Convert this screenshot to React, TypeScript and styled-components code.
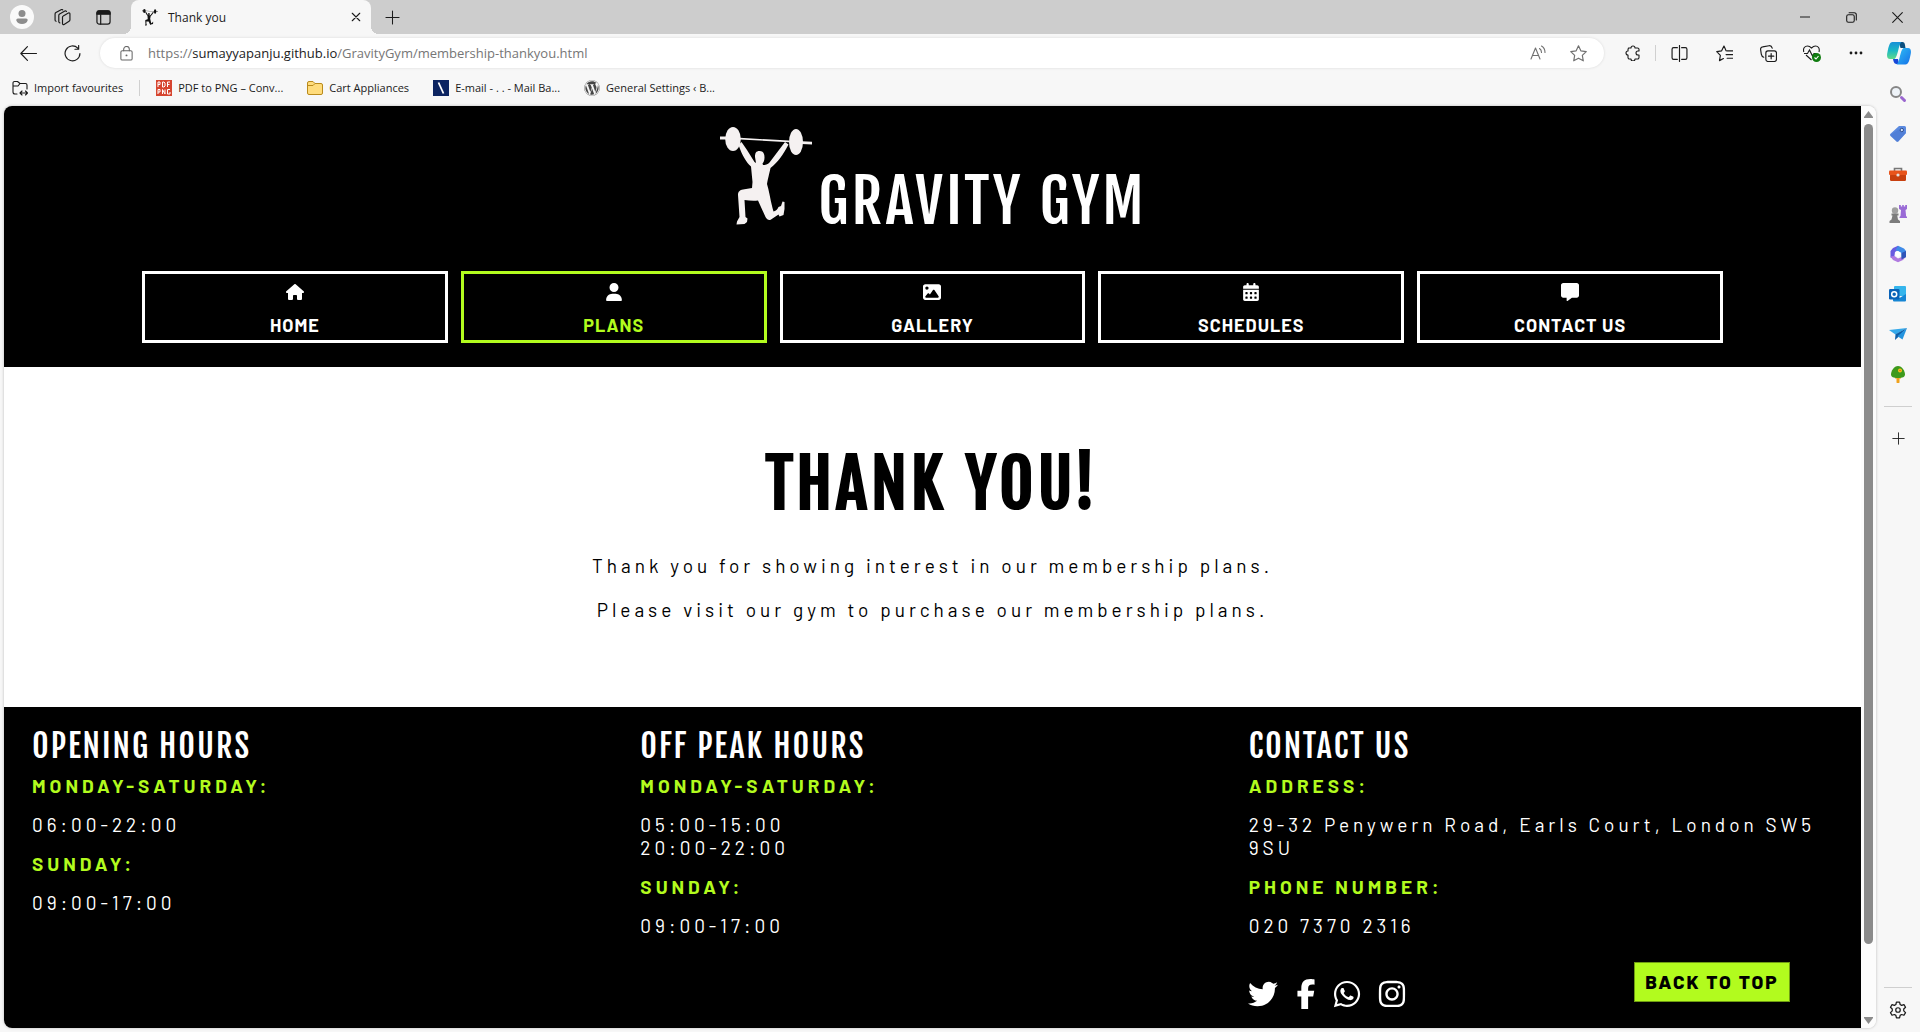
import React from "react";
import styled, { createGlobalStyle, css } from "styled-components";
import {
  FaHouse,
  FaUser,
  FaImage,
  FaCalendarDays,
  FaMessage,
  FaTwitter,
  FaFacebookF,
  FaWhatsapp,
  FaInstagram,
  FaWordpress,
} from "react-icons/fa6";

const LIME = "#b2fb1e";
const UI_FONT = `"Segoe UI", "Open Sans", "Noto Sans", sans-serif`;
const BODY_FONT = `Barlow, Roboto, "Liberation Sans", sans-serif`;
const DISPLAY_FONT = `"Fjalla One", "Roboto Condensed", "Liberation Sans Narrow", "Liberation Sans", sans-serif`;

const GlobalStyle = createGlobalStyle`
  *, *::before, *::after { box-sizing: border-box; }
  body { margin: 0; font-family: ${UI_FONT}; color: #1b1b1b; background: #f7f7f7; }
  h1, h2, h3, p, dl, dt, dd, ul { margin: 0; padding: 0; }
  button { font: inherit; color: inherit; border: 0; background: none; padding: 0; cursor: pointer; }
  a { color: inherit; text-decoration: none; }
  svg { display: block; flex: none; }
`;

/* ---------- browser window ---------- */

const Window = styled.div`
  display: flex;
  flex-direction: column;
  min-height: 100vh;
  background: #f7f7f7;
`;

const TitleBar = styled.div`
  display: flex;
  height: 34px;
  background: #cdcdcd;
`;

const TitleTools = styled.div`
  display: flex;
  align-items: center;
  gap: 15px;
  width: 131px;
  padding-left: 10px;
`;

const Avatar = styled.button`
  width: 24px;
  height: 24px;
  border-radius: 50%;
  background: #fafafa;
`;

const Tab = styled.div`
  position: relative;
  display: flex;
  align-items: center;
  gap: 10px;
  width: 240px;
  padding: 0 10px 0 11px;
  font-size: 12px;
  background: #f7f7f7;
  border-radius: 8px 8px 0 0;

  &::before,
  &::after {
    content: "";
    position: absolute;
    bottom: 0;
    width: 8px;
    height: 8px;
  }
  &::before {
    right: 100%;
    background: radial-gradient(circle at 0 0, transparent 8px, #f7f7f7 8px);
  }
  &::after {
    left: 100%;
    background: radial-gradient(circle at 100% 0, transparent 8px, #f7f7f7 8px);
  }
`;

const TabTitle = styled.span`
  flex: 1;
`;

const NewTab = styled.button`
  width: 42px;
  display: grid;
  place-items: center;
`;

const WindowControls = styled.div`
  display: flex;
  margin-left: auto;
`;

const WindowButton = styled.button`
  width: 46px;
  display: grid;
  place-items: center;
`;

const Toolbar = styled.div`
  display: flex;
  align-items: center;
  height: 38px;
`;

const ToolButton = styled.button<{ $w?: number }>`
  width: ${(p) => p.$w ?? 44}px;
  height: 30px;
  display: grid;
  place-items: center;
`;

const NavButtons = styled.div`
  display: flex;
  padding-right: 12px;
`;

const AddressBar = styled.div`
  flex: 1;
  display: flex;
  align-items: center;
  height: 30px;
  padding: 0 6px 0 4px;
  border-radius: 15px;
  background: #fff;
  box-shadow: 0 0 3px rgba(0, 0, 0, 0.12);
`;

const Url = styled.div`
  flex: 1;
  font-size: 13px;
  line-height: 20px;
  color: #767676;
  outline: none;
  white-space: nowrap;

  b {
    font-weight: 400;
    color: #1b1b1b;
  }
`;

const Divider = styled.span`
  width: 1px;
  height: 16px;
  background: #d0d0d0;
`;

const ToolbarIcons = styled.div`
  display: flex;
  align-items: center;
  padding-left: 7px;
`;

const Body = styled.div`
  flex: 1;
  display: flex;
`;

const Main = styled.div`
  flex: 1;
  min-width: 0;
  display: flex;
  flex-direction: column;
  padding: 0 0 4px 4px;
`;

const Bookmarks = styled.nav`
  display: flex;
  align-items: center;
  gap: 24px;
  height: 34px;
  padding: 0 0 3px 8px;

  ${Divider} {
    margin: 0 -8px;
  }
`;

const Bookmark = styled.a`
  display: flex;
  align-items: center;
  gap: 6px;
  font-size: 11px;
  white-space: nowrap;
`;

const Viewport = styled.div`
  position: relative;
  flex: 1;
  display: flex;
  border-radius: 8px;
  overflow: hidden;
  background: #fff;
  box-shadow: 0 0 3px rgba(0, 0, 0, 0.25);
`;

const Scrollbar = styled.div`
  display: flex;
  flex-direction: column;
  align-items: center;
  gap: 6px;
  width: 15px;
  padding: 5px 0 4px;
  background: #fcfcfc;
`;

const Thumb = styled.div`
  flex: 826;
  width: 9px;
  border-radius: 5px;
  background: #8b8b8b;
`;

const TrackRest = styled.div`
  flex: 61;
`;

const Sidebar = styled.aside`
  display: flex;
  flex-direction: column;
  align-items: center;
  width: 44px;
  padding: 2px 0 2px;
`;

const SideButton = styled.button`
  width: 40px;
  height: 40px;
  display: grid;
  place-items: center;
`;

const SideRule = styled.span<{ $bottom?: boolean }>`
  width: 28px;
  height: 1px;
  background: #cfcfcf;
  ${(p) => (p.$bottom ? css`margin: auto 0 2px;` : css`margin: 12px 0 11px;`)}
`;

/* ---------- gym site ---------- */

const Site = styled.div`
  flex: 1;
  min-width: 0;
  display: flex;
  flex-direction: column;
  font-family: ${BODY_FONT};
`;

const SiteHeader = styled.header`
  padding: 21px 0 24px;
  background: #000;
  color: #fff;
`;

const Brand = styled.a`
  display: flex;
  justify-content: center;
  gap: 6px;
  height: 144px;
  padding-left: 2px;
`;

const BrandName = styled.h1`
  font: 400 60px/84px ${DISPLAY_FONT};
  letter-spacing: 3px;
  padding-top: 32px;
`;

const SiteNav = styled.nav`
  display: grid;
  grid-template-columns: repeat(5, 1fr);
  gap: 13px;
  margin: 0 138px;
`;

const NavLink = styled.a<{ $active?: boolean }>`
  display: flex;
  flex-direction: column;
  align-items: center;
  gap: 11px;
  height: 72px;
  padding-top: 9px;
  border: 3px solid ${(p) => (p.$active ? LIME : "#fff")};
  font-size: 18px;
  line-height: 26px;
  font-weight: 700;
  letter-spacing: 1px;

  svg {
    width: auto;
    height: 18px;
  }

  span {
    color: ${(p) => (p.$active ? LIME : "#fff")};
  }
`;

const Message = styled.main`
  padding: 74px 0 85px;
  text-align: center;
  color: #000;
`;

const MessageTitle = styled.h2`
  font: 700 66px/86px ${DISPLAY_FONT};
  letter-spacing: 4px;
  margin-bottom: 27px;
`;

const MessageText = styled.p`
  font-size: 19px;
  line-height: 24px;
  letter-spacing: 4px;

  & + & {
    margin-top: 20px;
  }
`;

const SiteFooter = styled.footer`
  flex: 1;
  display: grid;
  grid-template-columns: repeat(3, 1fr);
  padding: 17px 4px 0 28px;
  background: #000;
  color: #fff;
`;

const FooterColumn = styled.section`
  padding-right: 28px;
`;

const FooterTitle = styled.h3`
  font: 400 32px/44px ${DISPLAY_FONT};
  letter-spacing: 2px;
  margin-bottom: 6px;
`;

const Facts = styled.dl`
  font-size: 19px;
  line-height: 23px;
  letter-spacing: 4px;

  dt {
    font-weight: 700;
    color: ${LIME};
  }
  dd {
    margin: 16px 0;
  }
`;

const Social = styled.div`
  display: flex;
  align-items: center;
  gap: 19px;
  margin-top: 42px;
`;

const SocialLink = styled.a<{ $w: number }>`
  display: flex;
  justify-content: center;
  width: ${(p) => p.$w}px;
`;

const BackToTop = styled.a`
  position: absolute;
  right: 86px;
  bottom: 26px;
  width: 156px;
  height: 40px;
  border: 1px solid #6f9c12;
  background: ${LIME};
  color: #000;
  font: 800 19px/38px ${BODY_FONT};
  letter-spacing: 2px;
  text-align: center;
  white-space: nowrap;
`;

/* ---------- drawings ---------- */

const Lifter = ({ width, height, color }: { width: number; height: number; color: string }) => (
  <svg width={width} height={height} viewBox="0 0 92 100" fill={color} aria-hidden="true">
    <ellipse cx="13" cy="12" rx="7.8" ry="12" />
    <ellipse cx="76" cy="15" rx="7" ry="13" />
    <path d="M0 9.5h7v3H0z M20 10.800l49 2.800v1.600L20 12.400z M82 14.200l10 .6v2.800L82 17z" />
    <path d="M39.500 24c4 0 5 3 5 6.500 0 3-1 5-2 6l.5 1.500c2 0 5-.5 6.500-2.500L65 15l3.500 2.500C63 28 58 35 50.500 41c-1.500 7-2.500 10-3.500 16 2 6 3 14 5.500 24l1 3.500c3-1 4-2 5-4.500l2.500-1 1.500-4.500 2 .5v7l-1 6-4 1.500-1-2-7.500 5c-2 1.500-4 0-5.500-2.500L38 73.500c-5 .8-9 0-13.500-.5l1 17 2 1.500-.5 3.500-2.500 2-8 .5.500-3 2.500-4.500L18 68c0-3.500 2-5 5-5.500l9-1.500.5-6L31 39.500C26 35 22 28 18.500 18l3-3L27 23l7.500 12 1.500 1-1-6c0-4 1-6 4.500-6z" />
  </svg>
);

type IconProps = { size?: number; children: React.ReactNode; color?: string; sw?: number };
const Line = ({ size = 16, children, color = "#1b1b1b", sw = 1.1 }: IconProps) => (
  <svg width={size} height={size} viewBox="0 0 16 16" fill="none" stroke={color} strokeWidth={sw} strokeLinecap="round" strokeLinejoin="round" aria-hidden="true">
    {children}
  </svg>
);

const STAR = "M8 .8l2.200 4.700 5.100.7-3.700 3.600.9 5.100L8 12.400l-4.500 2.500.9-5.100L.7 6.200l5.100-.7z";

const sideIcons: { label: string; art: React.ReactNode }[] = [
  {
    label: "Search",
    art: (
      <svg width="18" height="18" viewBox="0 0 18 18" fill="none">
        <circle cx="7" cy="7" r="5" stroke="#868686" strokeWidth="2" fill="#eef3f8" />
        <path d="M12.500 12.500l3 3" stroke="#9a66cf" strokeWidth="3" strokeLinecap="round" />
      </svg>
    ),
  },
  {
    label: "Shopping",
    art: (
      <svg width="18" height="18" viewBox="0 0 18 18">
        <path d="M10 1h5.500a1.500 1.500 0 011.500 1.500V8l-7.500 8.200a1.500 1.500 0 01-2.200 0L1.500 11a1.500 1.500 0 010-2.200z" fill="#5b8ae0" />
        <path d="M1.200 10l8.300-5.500L17 8l-7.500 8.200a1.500 1.500 0 01-2.200 0z" fill="#4b78d0" opacity=".6" />
        <circle cx="12.800" cy="5" r="1.700" fill="#cfe0ff" stroke="#2e4f8f" />
      </svg>
    ),
  },
  {
    label: "Tools",
    art: (
      <svg width="18" height="16" viewBox="0 0 18 16">
        <path d="M5.500 5V2.500h7V5" fill="none" stroke="#777" strokeWidth="1.600" />
        <rect x="1" y="8" width="16" height="7" rx="1.200" fill="#c8400f" />
        <rect x="0" y="4.500" width="18" height="4.500" rx="1" fill="#e8541c" />
        <circle cx="9" cy="9" r="1.600" fill="#e2e2e2" />
      </svg>
    ),
  },
  {
    label: "Games",
    art: (
      <svg width="18" height="20" viewBox="0 0 18 20">
        <path d="M10 1h1.800v1.500h1.400V1h1.600v1.500h1.400V1H18v4l-1.500 1 .6 6 .9 1v1h-7.500v-1l1-1 .5-6L10 5z" fill="#9a6bd6" />
        <circle cx="6" cy="6.500" r="3.200" fill="#a0a0a0" />
        <path d="M2.500 9.500h7v2H8.200l.8 4 2 1.500v2H.5v-2l2-1.500 1-4h-1z" fill="#7c7c7c" />
      </svg>
    ),
  },
  {
    label: "Microsoft 365",
    art: (
      <svg width="18" height="18" viewBox="0 0 18 18">
        <path d="M9 .8L4 3 1.500 6v6.500L5 14l1-7 4.500-3z" fill="#6a5be0" />
        <path d="M9 .8l6 2.700L17 6v6l-4.500 2.500V8L6.500 5z" fill="#3f8be8" />
        <path d="M1.500 11.500L4 15l5 2.200 5-2.200 3-3.500-4.500.5L9 13.500 5.500 11z" fill="#b07ae0" />
        <path d="M12.500 8L17 6v6l-4.500 2.500z" fill="#2f55b8" />
        <path d="M9 6l2.600 1.500v3L9 12l-2.600-1.500v-3z" fill="#fff" />
      </svg>
    ),
  },
  {
    label: "Outlook",
    art: (
      <svg width="18" height="18" viewBox="0 0 18 18">
        <rect x="5" y="1" width="12" height="10" rx="1" fill="#35b5ec" />
        <path d="M4 9l6.500 4L17 9v6.500a1 1 0 01-1 1H5a1 1 0 01-1-1z" fill="#1686d4" />
        <rect x="0" y="4" width="10.500" height="10.500" rx="1.200" fill="#0a63b8" />
        <circle cx="5.200" cy="9.200" r="2.500" fill="none" stroke="#fff" strokeWidth="1.500" />
      </svg>
    ),
  },
  {
    label: "Drop",
    art: (
      <svg width="18" height="14" viewBox="0 0 18 14">
        <path d="M0 3L18 1 6.500 7.500z" fill="#35a9ea" />
        <path d="M18 1L6.500 7.200 6 13l3-2.800z" fill="#0d5ea8" />
        <path d="M18 1L8.500 9.200 13.500 12.500z" fill="#2494df" />
      </svg>
    ),
  },
  {
    label: "E-tree",
    art: (
      <svg width="16" height="18" viewBox="0 0 16 18">
        <path d="M5 12h6v1.500H9.500V17a1.500 1.500 0 01-3 0v-3.500H5z" fill="#f0a21c" />
        <path d="M8 1c4 0 7 5 7 8.500C15 12 12.500 13 8 13S1 12 1 9.500C1 6 4 1 8 1z" fill="#3d9a1c" />
        <circle cx="10" cy="5.500" r="2" fill="#ffc21c" />
        <circle cx="10" cy="5.500" r=".8" fill="#d86a10" />
      </svg>
    ),
  },
];

const navItems = [
  { label: "HOME", Icon: FaHouse },
  { label: "PLANS", Icon: FaUser, active: true },
  { label: "GALLERY", Icon: FaImage },
  { label: "SCHEDULES", Icon: FaCalendarDays },
  { label: "CONTACT US", Icon: FaMessage },
];

const columns: { title: string; facts: [string, string[]][] }[] = [
  { title: "OPENING HOURS", facts: [["MONDAY-SATURDAY:", ["06:00-22:00"]], ["SUNDAY:", ["09:00-17:00"]]] },
  { title: "OFF PEAK HOURS", facts: [["MONDAY-SATURDAY:", ["05:00-15:00", "20:00-22:00"]], ["SUNDAY:", ["09:00-17:00"]]] },
  {
    title: "CONTACT US",
    facts: [["ADDRESS:", ["29-32 Penywern Road, Earls Court, London SW5 9SU"]], ["PHONE NUMBER:", ["020 7370 2316"]]],
  },
];

const social = [
  { label: "Twitter", Icon: FaTwitter, w: 29 },
  { label: "Facebook", Icon: FaFacebookF, w: 18 },
  { label: "WhatsApp", Icon: FaWhatsapp, w: 26 },
  { label: "Instagram", Icon: FaInstagram, w: 26 },
];

export default function App() {
  return (
    <>
      <GlobalStyle />
      <Window>
        <TitleBar>
          <TitleTools>
            <Avatar aria-label="Profile">
              <svg width="24" height="24" viewBox="0 0 24 24" fill="#8d8d8d">
                <circle cx="12" cy="8.500" r="3.500" />
                <path d="M8 13.500h8c1.200 0 1.800.8 1.600 1.800-.5 2.500-2.600 3.700-5.600 3.700s-5.100-1.200-5.600-3.700c-.2-1 .4-1.800 1.600-1.800z" />
              </svg>
            </Avatar>
            <ToolButton $w={26} aria-label="Workspaces">
              <Line size={17}>
                <path d="M8.700 6.500l4.800-2.700c.8-.4 1.500 0 1.500.8v5.600c0 .6-.3 1.100-.8 1.400l-4.700 3c-.7.400-1.500 0-1.500-.8V7.700c0-.5.300-1 .7-1.200z" />
                <path d="M5.500 13c-.7-.1-1-.5-1-1.200V6c0-.5.300-1 .8-1.300l4.900-2.800c.6-.3 1.200-.1 1.500.4" />
                <path d="M2 11.500c-.7-.1-1-.5-1-1.200V4.600c0-.5.300-1 .8-1.300L6.700.6c.6-.3 1.200-.1 1.500.3" />
              </Line>
            </ToolButton>
            <ToolButton $w={26} aria-label="Tab actions">
              <Line size={15} sw={1.300}>
                <rect x="1" y="1" width="14" height="14" rx="2.500" />
                <path d="M1 4V3a2 2 0 012-2h10a2 2 0 012 2v1.500H1z" fill="#1b1b1b" />
                <path d="M5 5v10" />
              </Line>
            </ToolButton>
          </TitleTools>
          <Tab>
            <Lifter width={16} height={17} color="#111" />
            <TabTitle>Thank you</TabTitle>
            <button aria-label="Close tab">
              <Line size={10} sw={1.800}><path d="M2 2l12 12M14 2L2 14" /></Line>
            </button>
          </Tab>
          <NewTab aria-label="New tab">
            <Line size={15}><path d="M8 1v14M1 8h14" /></Line>
          </NewTab>
          <WindowControls>
            <WindowButton aria-label="Minimise"><Line size={10} sw={1.600}><path d="M0 8h16" /></Line></WindowButton>
            <WindowButton aria-label="Restore">
              <Line size={11} sw={1.600}>
                <rect x="1" y="4" width="11" height="11" rx="2.500" />
                <path d="M4.500 1H12a3 3 0 013 3v7.500" />
              </Line>
            </WindowButton>
            <WindowButton aria-label="Close"><Line size={11} sw={1.600}><path d="M1 1l14 14M15 1L1 15" /></Line></WindowButton>
          </WindowControls>
        </TitleBar>

        <Toolbar>
          <NavButtons>
            <ToolButton $w={56} aria-label="Back"><Line size={17}><path d="M15.500 8H.8M7 1.500L.8 8 7 14.500" /></Line></ToolButton>
            <ToolButton $w={32} aria-label="Refresh">
              <Line size={17}><path d="M15 8a7 7 0 11-2-5M13.800.5V4h-3.500" /></Line>
            </ToolButton>
          </NavButtons>
          <AddressBar>
            <ToolButton aria-label="Site information">
              <Line size={15} color="#666"><rect x="2" y="5" width="12" height="10" rx="1.500" /><path d="M5 5V3.500a3 3 0 016 0V5" /><circle cx="8" cy="10" r=".5" /></Line>
            </ToolButton>
            <Url role="textbox" aria-label="Address" contentEditable suppressContentEditableWarning spellCheck={false}>
              https://<b>sumayyapanju.github.io</b>/GravityGym/membership-thankyou.html
            </Url>
            <ToolButton $w={40} aria-label="Read aloud">
              <Line size={16} color="#707070"><path d="M1 14L5.500 3 10 14M2.600 10.500h5.800M9.500 3.500c1.500 1 2 2.500 2 4M11.500 1c2.500 1.500 3.500 4 3.500 6.500" /></Line>
            </ToolButton>
            <ToolButton $w={40} aria-label="Add to favourites"><Line size={17} color="#707070"><path d={STAR} /></Line></ToolButton>
          </AddressBar>
          <ToolbarIcons>
            <ToolButton aria-label="Extensions">
              <Line><path d="M3.500 3H6a2 2 0 014 0h2.500A1.500 1.500 0 0114 4.500V6h-1a2 2 0 000 4h1v2.500a1.500 1.500 0 01-1.500 1.500H10a2 2 0 01-4 0H4.500A1.500 1.500 0 013 12.500V10a2 2 0 010-4V4.500z" /></Line>
            </ToolButton>
            <Divider />
            <ToolButton $w={46} aria-label="Split screen">
              <Line size={17}><path d="M8 .5v15M6 2.500H2.500a1.500 1.500 0 00-1.500 1.500v8a1.500 1.500 0 001.500 1.500H6M10 2.500h3.500A1.500 1.500 0 0115 4v8a1.500 1.500 0 01-1.500 1.500H10" /></Line>
            </ToolButton>
            <ToolButton aria-label="Favourites">
              <Line size={17}><path d="M9.500 5.500L7.500 1 5.300 5.500.7 6.200l3.400 3.500-.8 5 3.700-2M10.500 5.500H16M9.500 9H16M10.500 12.500H16" /></Line>
            </ToolButton>
            <ToolButton aria-label="Collections">
              <Line size={17}><rect x="5.500" y="5.500" width="10" height="10" rx="2" /><path d="M10.500 8v5M8 10.500h5M3.500 11.500C2 11 1.500 10 1.200 8.500L.6 4.500C.4 3 1 2 2.500 1.800L8.500.7c1.500-.2 2.500.5 3 2.300" /></Line>
            </ToolButton>
            <ToolButton aria-label="Browser essentials">
              <svg width="18" height="17" viewBox="0 0 18 17" fill="none" stroke="#1b1b1b" strokeWidth="1.100">
                <path d="M.8 7C-.3 3 2 1 4.500 1 6.500 1 7.500 2 8.500 3 9.500 2 10.500 1 12.500 1 15 1 17 3 16 7M3 10l5.500 5M1 8.500h3.500L6.500 5l3 6L11 8.500h2" />
                <circle cx="13.500" cy="12.500" r="4.500" fill="#107c10" stroke="none" />
                <path d="M11.500 12.500l1.500 1.500 2.500-3" stroke="#fff" />
              </svg>
            </ToolButton>
            <ToolButton aria-label="Settings and more">
              <svg width="14" height="4" viewBox="0 0 14 4" fill="#1b1b1b"><circle cx="2" cy="2" r="1.400" /><circle cx="7" cy="2" r="1.400" /><circle cx="12" cy="2" r="1.400" /></svg>
            </ToolButton>
            <ToolButton $w={42} aria-label="Copilot">
              <svg width="24" height="23" viewBox="0 0 24 23">
                <defs>
                  <linearGradient id="cpl" x1="0" y1="0" x2="0" y2="1"><stop offset="0" stopColor="#1890d8" /><stop offset=".5" stopColor="#1ab8c4" /><stop offset="1" stopColor="#5fd98a" /></linearGradient>
                  <linearGradient id="cpr" x1="0" y1="0" x2="1" y2="1"><stop offset="0" stopColor="#2fc0f5" /><stop offset="1" stopColor="#1670e8" /></linearGradient>
                </defs>
                <path d="M12 0h3.500C18 0 18 3 18.500 6h-5z" fill="#0b4f7e" />
                <path d="M5.500 0h9c-3 2-3.500 15-7 17H3c-3 0-3.500-3-2.500-7C1.500 5 2.500 0 5.500 0z" fill="url(#cpl)" />
                <path d="M6 17h5l1 5H9.500C7 22 6.500 19 6 17z" fill="#1746d8" />
                <path d="M16.500 6H21c3 0 3.500 3 2.500 7-1 5-2 9.500-5 9.500H9.500C13 20 13 8 16.500 6z" fill="url(#cpr)" />
              </svg>
            </ToolButton>
          </ToolbarIcons>
        </Toolbar>

        <Body>
          <Main>
            <Bookmarks aria-label="Favourites bar">
              <Bookmark href="#">
                <Line size={16}><path d="M5 14H3a2 2 0 01-2-2V3a1.500 1.500 0 011.500-1.500h3L8 3.500h5.500A1.500 1.500 0 0115 5v4M1 6h5l2-2.500M8 13h7.500M10 11l-2 2 2 2M13.500 11l2 2-2 2" /></Line>
                Import favourites
              </Bookmark>
              <Divider />
              <Bookmark href="#">
                <svg width="16" height="16" viewBox="0 0 16 16"><rect width="16" height="16" fill="#d6452f" /><path d="M2 7V2h2v2.500H2M6.500 2v5H8l1-1V3L8 2zM11.500 7V2H14M11.500 4.500h2M2 14V9.500h2V12H2M6.500 14V9.500L9 14V9.500M14 9.500h-2.500V14H14v-2" fill="none" stroke="#fff" /></svg>
                PDF to PNG – Conv...
              </Bookmark>
              <Bookmark href="#">
                <svg width="16" height="16" viewBox="0 0 16 16"><path d="M.5 3A1.500 1.500 0 012 1.500h4L8 3.500h6A1.500 1.500 0 0115.500 5v8a1.500 1.500 0 01-1.500 1.500H2A1.500 1.500 0 01.5 13z" fill="#ffdc7c" stroke="#b98a1c" /><path d="M.5 5.500H6l2-2" fill="none" stroke="#b98a1c" /></svg>
                Cart Appliances
              </Bookmark>
              <Bookmark href="#">
                <svg width="16" height="16" viewBox="0 0 16 16"><rect width="16" height="16" fill="#0c2461" /><path d="M5.500 2.500l5 11" stroke="#fff" strokeWidth="1.800" /></svg>
                E-mail - . . - Mail Ba...
              </Bookmark>
              <Bookmark href="#">
                <FaWordpress size={16} color="#464646" />
                General Settings ‹ B...
              </Bookmark>
            </Bookmarks>

            <Viewport>
              <Site>
                <SiteHeader>
                  <Brand href="#">
                    <Lifter width={92} height={100} color="#f5f1f1" />
                    <BrandName>GRAVITY GYM</BrandName>
                  </Brand>
                  <SiteNav>
                    {navItems.map(({ label, Icon, active }) => (
                      <NavLink key={label} href="#" $active={active}>
                        <Icon />
                        <span>{label}</span>
                      </NavLink>
                    ))}
                  </SiteNav>
                </SiteHeader>
                <Message>
                  <MessageTitle>THANK YOU!</MessageTitle>
                  <MessageText>Thank you for showing interest in our membership plans.</MessageText>
                  <MessageText>Please visit our gym to purchase our membership plans.</MessageText>
                </Message>
                <SiteFooter>
                  {columns.map((col) => (
                    <FooterColumn key={col.title}>
                      <FooterTitle>{col.title}</FooterTitle>
                      <Facts>
                        {col.facts.map(([term, lines]) => (
                          <React.Fragment key={term}>
                            <dt>{term}</dt>
                            <dd>{lines.map((l) => <div key={l}>{l}</div>)}</dd>
                          </React.Fragment>
                        ))}
                      </Facts>
                      {col.title === "CONTACT US" && (
                        <Social>
                          {social.map(({ label, Icon, w }) => (
                            <SocialLink key={label} href="#" aria-label={label} $w={w}><Icon size={30} /></SocialLink>
                          ))}
                        </Social>
                      )}
                    </FooterColumn>
                  ))}
                </SiteFooter>
              </Site>
              <Scrollbar>
                <svg width="9" height="7" viewBox="0 0 9 7" fill="#8b8b8b"><path d="M4.500 0L9 6v1H0V6z" /></svg>
                <Thumb />
                <TrackRest />
                <svg width="9" height="7" viewBox="0 0 9 7" fill="#8b8b8b"><path d="M4.500 7L9 1V0H0v1z" /></svg>
              </Scrollbar>
              <BackToTop href="#">BACK TO TOP</BackToTop>
            </Viewport>
          </Main>
          <Sidebar>
            {sideIcons.map((i) => (
              <SideButton key={i.label} aria-label={i.label}>{i.art}</SideButton>
            ))}
            <SideRule />
            <SideButton aria-label="Customise"><Line size={13}><path d="M8 1v14M1 8h14" /></Line></SideButton>
            <SideRule $bottom />
            <SideButton aria-label="Settings">
              <Line size={18}>
                <circle cx="8" cy="8" r="2" />
                <path d="M6.600 1h2.800l.5 2.100 1.300.8 2.100-.7 1.400 2.400-1.600 1.500v1.700l1.600 1.500-1.400 2.400-2.100-.7-1.300.8-.5 2.100H6.600l-.5-2.100-1.300-.8-2.100.7-1.400-2.400 1.600-1.500V7.100L1.300 5.600l1.400-2.400 2.100.7 1.300-.8z" />
              </Line>
            </SideButton>
          </Sidebar>
        </Body>
      </Window>
    </>
  );
}
